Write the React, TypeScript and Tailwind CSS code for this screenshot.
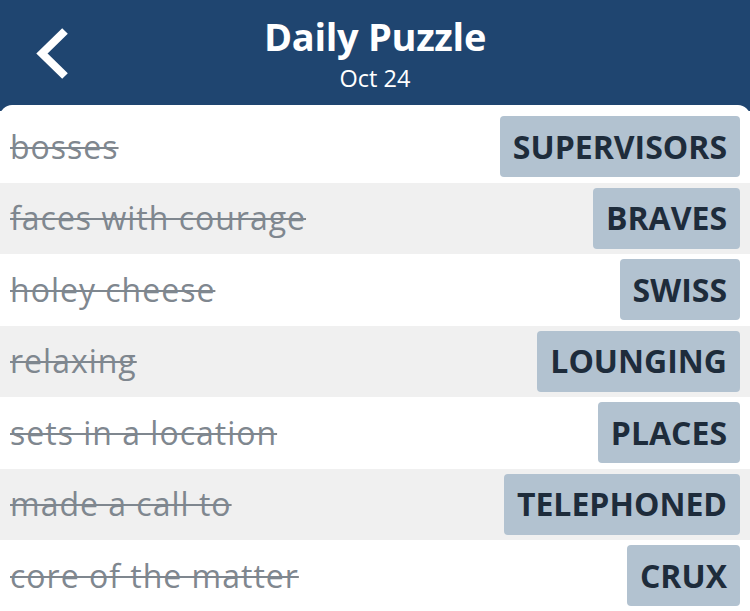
import React from "react";

const rows: [string, string][] = [
  ["bosses", "SUPERVISORS"],
  ["faces with courage", "BRAVES"],
  ["holey cheese", "SWISS"],
  ["relaxing", "LOUNGING"],
  ["sets in a location", "PLACES"],
  ["made a call to", "TELEPHONED"],
  ["core of the matter", "CRUX"],
];

export default function App() {
  return (
    <div
      className="w-[750px] h-[611px] overflow-hidden bg-[#1f4570]"
      style={{ fontFamily: '"Open Sans", "Noto Sans", sans-serif' }}
    >
      <header className="relative h-[105px] flex flex-col items-center text-white">
        <button className="absolute left-[34px] top-[26px] w-[40px] h-[56px] flex items-center justify-center">
          <svg width="40" height="56" viewBox="0 0 40 56" fill="none">
            <path d="M31 5 L8 27.5 L31 50" stroke="white" strokeWidth="8" strokeLinecap="butt" strokeLinejoin="miter" />
          </svg>
        </button>
        <h1 className="mt-[12px] text-[38px] leading-[48px] font-bold tracking-[-0.3px]">Daily Puzzle</h1>
        <div className="mt-[4px] text-[23.5px] leading-[28px]">Oct 24</div>
      </header>
      <main className="bg-white rounded-t-[12px] pt-[6px]">
        {rows.map(([clue, answer], i) => (
          <div
            key={clue}
            className={`h-[71.5px] flex items-center justify-between pl-[10px] pr-[10px] ${
              i % 2 === 1 ? "bg-[#f0f0f0]" : "bg-white"
            }`}
          >
            <span className="text-[32px] tracking-[1px] text-[#7f878f] line-through decoration-[2px] decoration-[#7f878f]">
              {clue}
            </span>
            <span className="h-[61px] flex items-center px-[13px] rounded-[4px] bg-[#b2c2d0] text-[#1e2c3b] text-[32px] font-bold">
              {answer}
            </span>
          </div>
        ))}
      </main>
    </div>
  );
}
